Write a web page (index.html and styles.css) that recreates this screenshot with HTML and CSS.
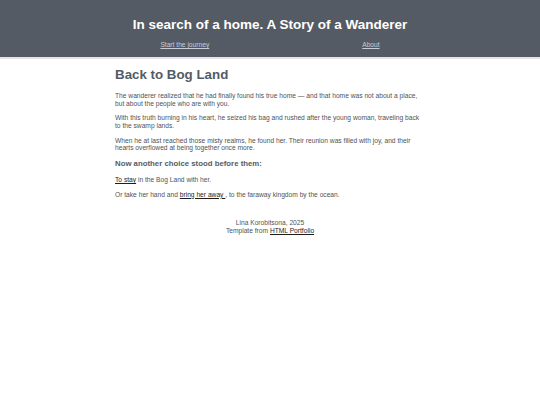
FILE: index.html
```html
<!DOCTYPE html>
<html lang="en">
<head>
<meta charset="utf-8">
<title>Back to Bog Land</title>
<link rel="stylesheet" href="styles.css">
</head>
<body>
<header class="site-header">
  <h1 class="site-title">In search of a home. A Story of a Wanderer</h1>
  <nav class="site-nav">
    <a href="#">Start the journey</a>
    <a href="#">About</a>
  </nav>
</header>
<main class="content">
  <h2 class="page-title">Back to Bog Land</h2>
  <p>The wanderer realized that he had finally found his true home — and that home was not about a place, but about the people who are with you.</p>
  <p>With this truth burning in his heart, he seized his bag and rushed after the young woman, traveling back to the swamp lands.</p>
  <p>When he at last reached those misty realms, he found her. Their reunion was filled with joy, and their hearts overflowed at being together once more.</p>
  <h3 class="choice-title">Now another choice stood before them:</h3>
  <p><a href="#">To stay</a> in the Bog Land with her.</p>
  <p>Or take her hand and <a href="#">bring her away </a>, to the faraway kingdom by the ocean.</p>
</main>
<footer class="site-footer">
  <p>Lina Korobitsona, 2025</p>
  <p>Template from <a href="#">HTML Portfolio</a></p>
</footer>
</body>
</html>
```
FILE: styles.css
```css
html, body {
  margin: 0;
  padding: 0;
  background: #ffffff;
}
body {
  font-family: "Liberation Sans", Arial, sans-serif;
  font-size: 6.67px;
  line-height: 7.8px;
  color: #4f5357;
}
.site-header {
  background: #545b64;
  border-bottom: 2px solid #e4e4e4;
  padding: 17px 0 8.2px;
  text-align: center;
}
.site-title {
  margin: 0;
  color: #ffffff;
  font-size: 13.5px;
  line-height: 15px;
  font-weight: bold;
}
.site-nav {
  display: flex;
  justify-content: center;
  gap: 153px;
  margin-top: 9px;
}
.site-nav a {
  color: #c8ccd2;
}
.content {
  width: 310px;
  margin: 0 auto;
  padding-top: 8.4px;
}
.page-title {
  margin: 0 0 8.8px;
  font-size: 13.33px;
  line-height: 16px;
  color: #545b64;
}
.content p {
  margin: 0 0 6.67px;
}
.choice-title {
  margin: 0 0 8.2px;
  font-size: 7.8px;
  line-height: 9px;
  color: #545b64;
}
.content a, .site-footer a {
  color: #1e1e1e;
}
.site-footer {
  text-align: center;
  margin-top: 20.7px;
}
.site-footer p {
  margin: 0;
}
```
